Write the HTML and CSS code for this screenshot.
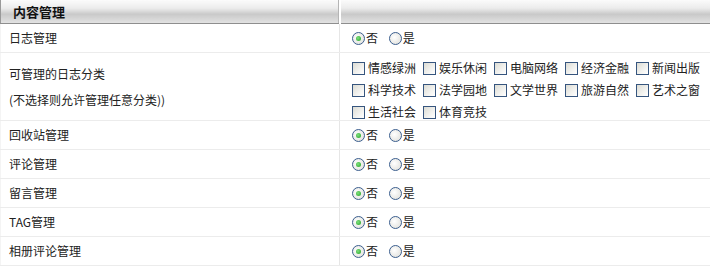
FILE: index.html
```html
<!DOCTYPE html>
<html lang="zh-CN">
<head>
    <meta charset="UTF-8">
    <title>内容管理</title>
    <link rel="stylesheet" href="styles.css">
</head>
<body>
    <table class="perm-table">
        <colgroup>
            <col class="col-label">
            <col class="col-value">
        </colgroup>
        <thead>
            <tr>
                <th class="title">内容管理</th>
                <th class="blank"></th>
            </tr>
        </thead>
        <tbody>
            <tr>
                <td class="label">日志管理</td>
                <td><span class="radio on"></span>否 <span class="radio"></span>是</td>
            </tr>
            <tr class="tall">
                <td class="label">可管理的日志分类<br>(不选择则允许管理任意分类))</td>
                <td class="cats">
                    <div class="cat-list">
                        <span class="cat"><span class="check"></span>情感绿洲</span>
                        <span class="cat"><span class="check"></span>娱乐休闲</span>
                        <span class="cat"><span class="check"></span>电脑网络</span>
                        <span class="cat"><span class="check"></span>经济金融</span>
                        <span class="cat"><span class="check"></span>新闻出版</span>
                        <span class="cat"><span class="check"></span>科学技术</span>
                        <span class="cat"><span class="check"></span>法学园地</span>
                        <span class="cat"><span class="check"></span>文学世界</span>
                        <span class="cat"><span class="check"></span>旅游自然</span>
                        <span class="cat"><span class="check"></span>艺术之窗</span>
                        <span class="cat"><span class="check"></span>生活社会</span>
                        <span class="cat"><span class="check"></span>体育竞技</span>
                    </div>
                </td>
            </tr>
            <tr>
                <td class="label">回收站管理</td>
                <td><span class="radio on"></span>否 <span class="radio"></span>是</td>
            </tr>
            <tr>
                <td class="label">评论管理</td>
                <td><span class="radio on"></span>否 <span class="radio"></span>是</td>
            </tr>
            <tr>
                <td class="label">留言管理</td>
                <td><span class="radio on"></span>否 <span class="radio"></span>是</td>
            </tr>
            <tr>
                <td class="label">TAG管理</td>
                <td><span class="radio on"></span>否 <span class="radio"></span>是</td>
            </tr>
            <tr>
                <td class="label">相册评论管理</td>
                <td><span class="radio on"></span>否 <span class="radio"></span>是</td>
            </tr>
        </tbody>
    </table>
</body>
</html>
```

FILE: styles.css
```css
body {
    margin: 0;
    background: #fff;
    font-family: "Noto Sans CJK SC", "Liberation Sans", sans-serif;
    font-size: 12px;
    color: #222;
}

.perm-table {
    width: 710px;
    border-collapse: collapse;
    table-layout: fixed;
}

.col-label {
    width: 339px;
}

.perm-table th {
    height: 23px;
    padding: 0;
    text-align: left;
    background: linear-gradient(#fbfbfb, #ececec 35%, #c9c9c9 62%, #e2e2e2 100%);
    border-bottom: 1px solid #8e8e8e;
}

.perm-table th.title {
    padding-left: 12px;
    font-size: 13px;
    font-weight: bold;
    color: #111;
    border-left: 1px solid #999;
    border-right: 2px solid #fff;
    box-shadow: inset -1px 0 0 #b5b5b5;
}

.perm-table th.blank {
    border-left: 1px solid #bbb;
}

.perm-table td {
    height: 28px;
    padding: 0 0 0 12px;
    border-bottom: 1px solid #ececec;
    vertical-align: middle;
    line-height: 16px;
}

.perm-table td.label {
    padding-left: 8px;
    border-right: 1px solid #e6e6e6;
    border-left: 1px solid #f4f4f4;
}

.perm-table tr.tall td.label {
    line-height: 26px;
    padding-top: 1px;
}

.perm-table td.cats {
    padding-top: 4px;
    padding-bottom: 0;
}

.cat-list {
    display: flex;
    flex-wrap: wrap;
    width: 360px;
    line-height: 22px;
    margin-bottom: -3px;
}

.cat {
    width: 71px;
    white-space: nowrap;
}

.radio {
    display: inline-block;
    width: 11px;
    height: 11px;
    border: 1px solid #3c5f8f;
    border-radius: 50%;
    background: radial-gradient(circle at 40% 40%, #ffffff, #dcdcd6);
    vertical-align: -2px;
    margin-right: 1px;
    position: relative;
}

.radio.on::after {
    content: "";
    position: absolute;
    left: 3px;
    top: 3px;
    width: 5px;
    height: 5px;
    border-radius: 50%;
    background: radial-gradient(circle at 40% 40%, #7fe07f, #21a121);
}

.radio:nth-of-type(2) {
    margin-left: 8px;
}

.check {
    display: inline-block;
    width: 11px;
    height: 11px;
    border: 1px solid #36557e;
    background: linear-gradient(135deg, #dcdcd4, #f6f6f4 70%, #fff);
    vertical-align: -2px;
    margin-right: 3px;
}
```
